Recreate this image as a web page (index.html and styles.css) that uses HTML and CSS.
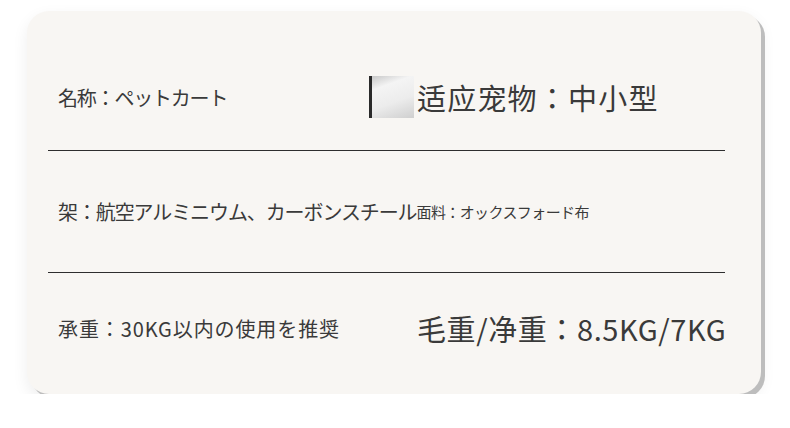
FILE: index.html
```html
<!DOCTYPE html>
<html lang="ja">
<head>
<meta charset="utf-8">
<link rel="stylesheet" href="styles.css">
</head>
<body>
<div class="card">
  <div class="row row1">
    <div class="name">名称：ペットカート</div>
    <div class="chip"></div>
    <div class="big">适应宠物：中小型</div>
  </div>
  <div class="row row2">
    <div class="frame">架：航空アルミニウム、カーボンスチール</div><div class="fabric">面料：オックスフォード布</div>
  </div>
  <div class="row row3">
    <div class="load">承重：30KG以内の使用を推奨</div>
    <div class="big weight">毛重/净重：8.5KG/7KG</div>
  </div>
</div>
</body>
</html>
```
FILE: styles.css
```css
html, body {
  margin: 0;
  padding: 0;
  background: #ffffff;
}
body {
  font-family: "Noto Sans CJK JP", "Noto Sans", sans-serif;
  color: #3a3a3a;
}
.card {
  margin: 11px 0 0 27px;
  width: 734px;
  height: 383px;
  box-sizing: border-box;
  padding: 0 36px 0 21px;
  border-radius: 22px;
  background: #f8f6f3;
  box-shadow: 4px 4px 0 #bdbdbd, 0 6px 16px rgba(0, 0, 0, 0.07);
  display: flex;
  flex-direction: column;
}
.row {
  display: flex;
  align-items: center;
  padding-left: 10px;
  box-sizing: border-box;
  white-space: nowrap;
}
.row1 {
  height: 140px;
  padding-top: 33px;
  border-bottom: 1px solid #2e2e2e;
}
.row2 {
  height: 122px;
  border-bottom: 1px solid #2e2e2e;
}
.row3 {
  flex: 1;
  padding-bottom: 11px;
}
.name {
  width: 311px;
  flex: none;
  font-size: 20px;
  letter-spacing: -1.2px;
}
.chip {
  width: 42px;
  height: 42px;
  flex: none;
  border-left: 3px solid #2a2a2a;
  background: linear-gradient(160deg, #c8c8c8 0%, #f4f4f4 25%, #ececec 60%, #cfcfcf 100%);
  margin-right: 3px;
}
.big {
  font-size: 29px;
  letter-spacing: 1.2px;
  flex: none;
}
.frame {
  font-size: 20px;
  letter-spacing: -1.1px;
}
.fabric {
  font-size: 15px;
  letter-spacing: -0.6px;
}
.load {
  width: 359px;
  flex: none;
  font-size: 20px;
  letter-spacing: 0.9px;
}
.weight {
  letter-spacing: 0.6px;
}
```
